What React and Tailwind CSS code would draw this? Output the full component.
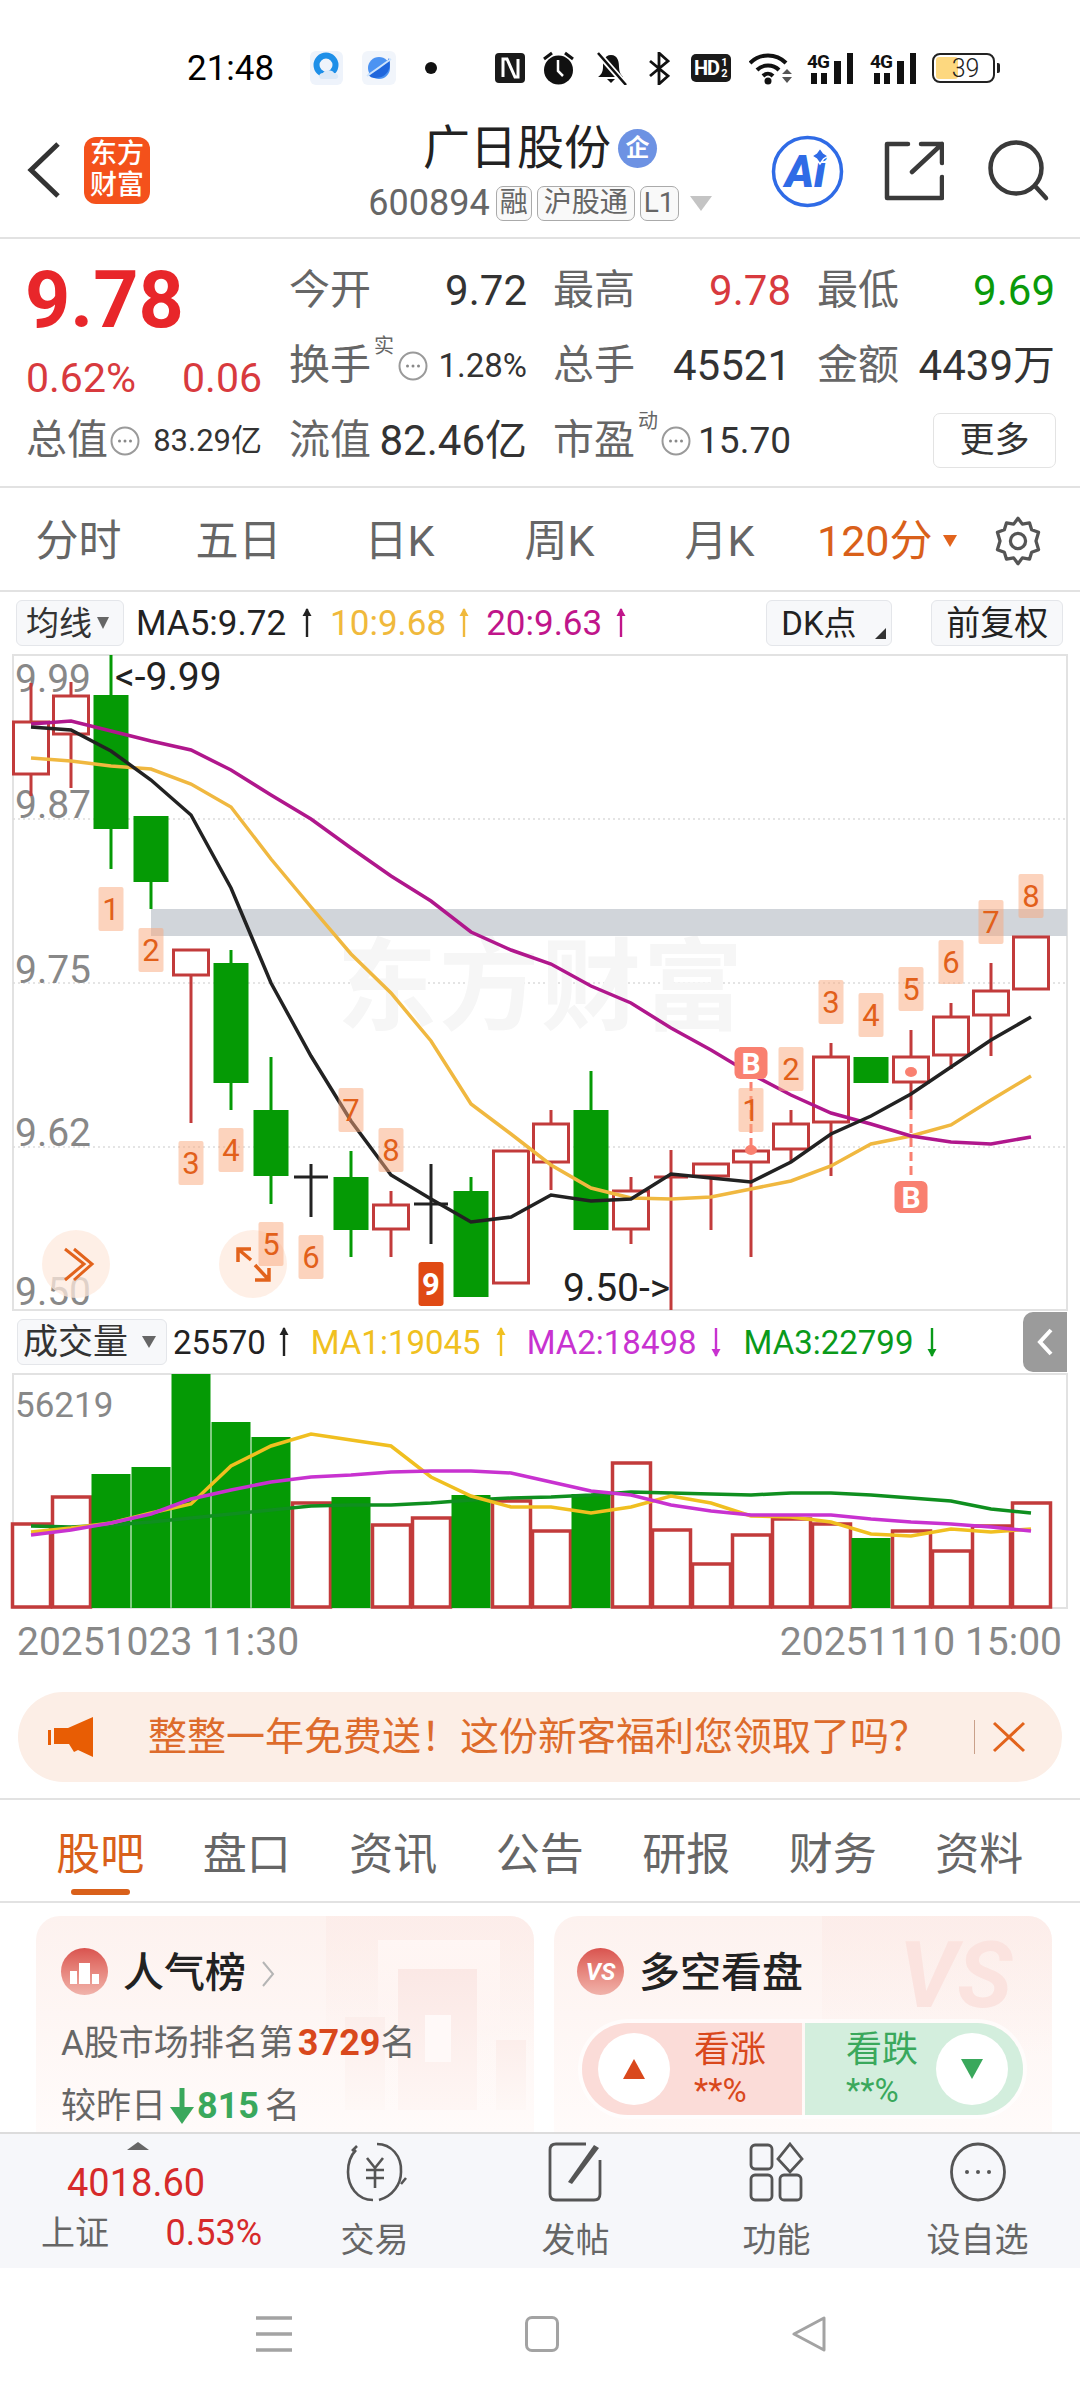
import React from 'react';

const xs = Array.from({ length: 26 }, (_, i) => 31 + i * 40);
const RED = '#c23b3b';
const GREEN = '#059a05';

// [high, top, bottom, low, kind]
const candles = [
  [683, 721, 775, 796, 'r'], [682, 695, 735, 788, 'r'], [655, 695, 829, 869, 'g'], [816, 816, 882, 909, 'g'],
  [949, 949, 976, 1123, 'r'], [950, 963, 1083, 1110, 'g'], [1057, 1110, 1176, 1204, 'g'], [1164, 1177, 1177, 1217, 'k'],
  [1151, 1177, 1230, 1257, 'g'], [1191, 1204, 1230, 1257, 'r'], [1164, 1204, 1204, 1244, 'k'], [1177, 1191, 1297, 1297, 'g'],
  [1150, 1150, 1284, 1284, 'r'], [1110, 1123, 1163, 1190, 'r'], [1071, 1110, 1230, 1230, 'g'], [1177, 1190, 1230, 1244, 'r'],
  [1150, 1177, 1177, 1310, 'l'], [1163, 1163, 1177, 1230, 'r'], [1150, 1150, 1163, 1257, 'r'], [1110, 1123, 1150, 1163, 'r'],
  [1043, 1056, 1123, 1176, 'r'], [1057, 1057, 1083, 1083, 'g'], [1030, 1056, 1083, 1110, 'r'], [1003, 1016, 1056, 1069, 'r'],
  [963, 990, 1016, 1056, 'r'], [936, 936, 990, 990, 'r'],
];

const maBlack = [727, 730, 751, 780, 815, 888, 983, 1056, 1121, 1175, 1199, 1222, 1217, 1195, 1201, 1199, 1174, 1178, 1182, 1162, 1134, 1116, 1094, 1067, 1040, 1017];
const maOrange = [758, 761, 766, 769, 784, 807, 859, 907, 954, 993, 1041, 1104, 1134, 1165, 1188, 1198, 1199, 1197, 1189, 1181, 1166, 1144, 1136, 1125, 1100, 1076];
const maPurple = [724, 721, 731, 741, 750, 770, 795, 819, 848, 876, 901, 932, 950, 964, 986, 1003, 1028, 1050, 1074, 1095, 1113, 1124, 1136, 1142, 1144, 1137];

const volumes = [1523, 1496, 1474, 1467, 1374, 1422, 1437, 1502, 1497, 1524, 1517, 1495, 1500, 1530, 1494, 1462, 1529, 1563, 1534, 1518, 1523, 1538, 1530, 1550, 1525, 1502];
const volGreen = [2, 3, 4, 5, 6, 8, 11, 14, 21];
const vol1 = [1532, 1528, 1523, 1513, 1504, 1466, 1446, 1434, 1440, 1446, 1477, 1496, 1507, 1507, 1513, 1507, 1496, 1503, 1516, 1517, 1522, 1534, 1536, 1529, 1532, 1529];
const vol2 = [1535, 1530, 1523, 1514, 1499, 1490, 1482, 1477, 1475, 1472, 1471, 1471, 1473, 1482, 1491, 1495, 1505, 1511, 1515, 1515, 1515, 1519, 1522, 1524, 1527, 1531];
const vol3 = [1526, 1527, 1525, 1522, 1518, 1514, 1510, 1506, 1505, 1505, 1503, 1500, 1498, 1497, 1495, 1492, 1493, 1494, 1495, 1493, 1493, 1495, 1498, 1501, 1509, 1513];

const tags = [
  [111, 909, '1'], [151, 950, '2'], [191, 1163, '3'], [231, 1150, '4'], [271, 1244, '5'], [311, 1257, '6'], [351, 1110, '7'], [391, 1150, '8'],
  [751, 1110, '1'], [791, 1069, '2'], [831, 1002, '3'], [871, 1015, '4'], [911, 989, '5'], [951, 962, '6'], [991, 922, '7'], [1031, 896, '8'],
];

const pts = (arr) => arr.map((y, i) => `${xs[i]},${y}`).join(' ');

const Arrow = ({ up = true, color }) => (
  <svg width="12" height="32" viewBox="0 0 12 32" className="shrink-0">
    <path d="M6 2V30" stroke={color} strokeWidth="2.4" />
    {up ? <path d="M1.5 9L6 1L10.5 9Z" fill={color} /> : <path d="M1.5 23L6 31L10.5 23Z" fill={color} />}
  </svg>
);

const Dots = ({ size = 30 }) => (
  <svg width={size} height={size} viewBox="0 0 30 30" className="shrink-0">
    <circle cx="15" cy="15" r="13.5" fill="none" stroke="#9a9a9a" strokeWidth="2" />
    <circle cx="9.5" cy="15" r="1.5" fill="#888" />
    <circle cx="15" cy="15" r="1.5" fill="#888" />
    <circle cx="20.5" cy="15" r="1.5" fill="#888" />
  </svg>
);

const Signal = ({ className }) => (
  <div className={`relative h-[31px] w-[46px] ${className}`}>
    <span className="absolute left-0 top-[-1px] text-[19px] font-bold leading-none tracking-[-1px] text-[#111]">4G</span>
    <svg width="46" height="31" viewBox="0 0 46 31" className="absolute inset-0">
      <path d="M4 20H10V31H4ZM14 20H20V31H14ZM27 8H34V31H27ZM40 0H46V31H40Z" fill="#111" />
    </svg>
  </div>
);

const StatusBar = () => (
  <div className="flex h-[105px] items-center pl-[187px] pt-[31px] text-black">
    <span className="w-[123px] text-[35px] leading-none">21:48</span>
    <svg width="33" height="34" viewBox="0 0 33 34">
      <rect width="33" height="34" rx="6" fill="#eef3fb" />
      <circle cx="16" cy="14" r="9.5" fill="none" stroke="#1e8fe8" strokeWidth="6" />
      <path d="M12 28C8 28 8 22 13 22C15 18 23 19 24 22C29 22 30 28 25 28Z" fill="#dce9f7" />
    </svg>
    <svg width="34" height="34" viewBox="0 0 34 34" className="ml-[19px]">
      <rect width="34" height="34" rx="6" fill="#f1f5fb" />
      <circle cx="17" cy="17" r="11" fill="#4b93f2" />
      <path d="M6 23C13 22 23 15 27 7C30 16 26 27 13 27C10 27 8 26 6 23Z" fill="#1f66dc" />
      <path d="M5 25L29 8" stroke="#cfe4fb" strokeWidth="2" />
    </svg>
    <span className="ml-[29px] h-[12px] w-[12px] rounded-full bg-[#111]" />
    <svg width="30" height="30" viewBox="0 0 30 30" className="ml-[58px]">
      <rect width="30" height="30" rx="4" fill="#1a1a1a" />
      <path d="M8 24V6H12L20 24H23V6" fill="none" stroke="#fff" strokeWidth="3" />
    </svg>
    <svg width="33" height="34" viewBox="0 0 33 34" className="ml-[17px]">
      <circle cx="16.5" cy="19" r="14.5" fill="#111" />
      <path d="M16 9V20L21 25" fill="none" stroke="#fff" strokeWidth="2.5" />
      <path d="M2 8L10 2M31 8L23 2" stroke="#111" strokeWidth="3" />
    </svg>
    <svg width="32" height="33" viewBox="0 0 32 33" className="ml-[20px]">
      <path d="M16 3C9 3 8 10 8 15C8 20 6 23 3 25H28C26 23 24 20 24 15C24 10 23 3 16 3Z" fill="#111" />
      <path d="M12 27H20L16 31Z" fill="#111" />
      <path d="M2 0L30 32" stroke="#fff" strokeWidth="6" />
      <path d="M3 1L31 33" stroke="#111" strokeWidth="2.5" />
    </svg>
    <svg width="21" height="33" viewBox="0 0 21 33" className="ml-[22px]">
      <path d="M1 9L19 24L10 32V1L19 9L1 24" fill="none" stroke="#111" strokeWidth="2.8" />
    </svg>
    <div className="ml-[21px] flex h-[28px] w-[40px] items-center rounded-[5px] bg-[#1a1a1a] pl-[3px] text-[20px] font-bold leading-none tracking-[-1px] text-white">
      HD
      <span className="ml-[2px] flex flex-col text-[11px] leading-[11px]">
        <span>1</span>
        <span>2</span>
      </span>
    </div>
    <svg width="44" height="33" viewBox="0 0 44 33" className="ml-[18px]">
      <path d="M1 11C11 1 27 1 37 11M8 18C14 12 24 12 30 18" fill="none" stroke="#111" strokeWidth="4" />
      <path d="M14 24C17 21 21 21 24 24" fill="none" stroke="#111" strokeWidth="4" />
      <circle cx="19" cy="29" r="3.5" fill="#111" />
      <path d="M33 22H43L38 17ZM33 25H43L38 31Z" fill="#555" />
    </svg>
    <Signal className="ml-[14px]" />
    <Signal className="ml-[17px]" />
    <div className="relative ml-[16px] flex h-[30px] w-[63px] items-center justify-center rounded-[8px] border-[2.5px] border-[#222] text-[25px] font-light leading-none text-[#222]">
      <span className="absolute inset-y-[2px] left-[2px] w-[22px] rounded-[3px] bg-[#fdd87f]" />
      <span className="relative ml-[4px]">39</span>
    </div>
    <span className="ml-[2px] h-[10px] w-[3px] rounded-r-[2px] bg-[#222]" />
  </div>
);

const SubTag = ({ className, children }) => (
  <span className={`flex h-[35px] items-center justify-center rounded-[7px] border border-[#aaa] bg-[#f9f9f9] text-[28px] leading-none text-[#666] ${className}`}>
    {children}
  </span>
);

const Header = () => (
  <div className="grid h-[134px] grid-cols-[1fr_auto_1fr] border-b-2 border-[#e2e2e2]">
    <div className="flex items-center pb-[2px]">
      <svg width="36" height="58" viewBox="0 0 36 58" className="ml-[26px]">
        <path d="M32 3L5 29L32 55" fill="none" stroke="#333" strokeWidth="5" />
      </svg>
      <div className="ml-[22px] flex h-[67px] w-[66px] flex-col items-center justify-center rounded-[12px] bg-[#f4511b] text-[27px] font-medium leading-[31px] text-[#fff]">
        <span>东方</span>
        <span>财富</span>
      </div>
    </div>
    <div className="flex flex-col items-center pt-[20px]">
      <div className="flex items-center">
        <span className="text-[47px] leading-[46px] text-[#222]">广日股份</span>
        <span className="ml-[7px] flex h-[39px] w-[39px] items-center justify-center rounded-full bg-[#6d92e3] text-[24px] font-bold leading-none text-white">企</span>
      </div>
      <div className="mt-[14px] flex items-center text-[#666]">
        <span className="text-[36px] leading-none">600894</span>
        <SubTag className="ml-[6px] w-[36px]">融</SubTag>
        <SubTag className="ml-[5px] w-[98px]">沪股通</SubTag>
        <SubTag className="ml-[5px] w-[39px]">L1</SubTag>
        <span className="ml-[11px] h-0 w-0 border-x-[11px] border-t-[15px] border-x-transparent border-t-[#c4c4c4]" />
      </div>
    </div>
    <div className="flex items-center justify-end pr-[30px]">
      <svg width="73" height="73" viewBox="0 0 73 73">
        <circle cx="36.5" cy="36.5" r="34" fill="#fff" stroke="#2f6be6" strokeWidth="3.5" />
        <text x="14" y="52" fontSize="44" fontWeight="900" fontStyle="italic" fill="#2f6be6">Ai</text>
        <path d="M49 13L52.5 18L57 21L52.5 24L49 29L45.5 24L41 21L45.5 18Z" fill="#2f6be6" stroke="#fff" strokeWidth="1.5" />
      </svg>
      <svg width="60" height="60" viewBox="0 0 60 60" className="ml-[40px]" fill="none" stroke="#3a3a3a" strokeWidth="4.5" strokeLinecap="round" strokeLinejoin="round">
        <path d="M24 3H3V57H58V36" />
        <path d="M37 3H58V22M58 3L28 31" />
      </svg>
      <svg width="62" height="62" viewBox="0 0 62 62" className="ml-[44px]" fill="none" stroke="#3a3a3a" strokeWidth="4.5" strokeLinecap="round">
        <circle cx="28" cy="28" r="25.5" />
        <path d="M47 46L58 58" />
      </svg>
    </div>
  </div>
);

const Stat = ({ label, value, color = 'text-[#333]' }) => (
  <div className="flex h-[75px] w-[238px] items-center justify-between">
    <span className="text-[41px] leading-none text-[#666]">{label}</span>
    <span className={`text-[42px] leading-none ${color}`}>{value}</span>
  </div>
);

const Quote = () => (
  <div className="grid h-[249px] grid-cols-[263px_264px_264px_239px] grid-rows-[75px_75px_75px] border-b-2 border-[#e2e2e2] pl-[26px] pt-[14px]">
    <div className="row-span-2">
      <div className="mt-[2px] -ml-[1px] text-[79px] font-bold leading-[90px] text-[#e8262a]">9.78</div>
      <div className="mt-[13px] flex w-[236px] justify-between text-[41px] leading-none text-[#d83a3e]">
        <span>0.62%</span>
        <span>0.06</span>
      </div>
    </div>
    <Stat label="今开" value="9.72" />
    <Stat label="最高" value="9.78" color="text-[#d83a3e]" />
    <Stat label="最低" value="9.69" color="text-[#0a9a0a]" />
    <div className="flex h-[75px] w-[238px] items-center">
      <span className="text-[41px] leading-none text-[#666]">换手</span>
      <span className="w-[27px] -translate-y-[20px] pl-[3px] text-[20px] leading-none text-[#666]">实</span>
      <Dots />
      <span className="ml-auto text-[33px] leading-none text-[#333]">1.28%</span>
    </div>
    <Stat label="总手" value="45521" />
    <Stat label="金额" value="4439万" />
    <div className="flex h-[75px] w-[236px] items-center">
      <span className="text-[41px] leading-none text-[#666]">总值</span>
      <span className="ml-[2px]"><Dots /></span>
      <span className="ml-auto text-[31px] leading-none text-[#333]">83.29亿</span>
    </div>
    <div className="flex h-[75px] w-[238px] items-center justify-between">
      <span className="text-[41px] leading-none text-[#666]">流值</span>
      <span className="text-[42px] leading-none text-[#333]">82.46亿</span>
    </div>
    <div className="flex h-[75px] w-[238px] items-center">
      <span className="text-[41px] leading-none text-[#666]">市盈</span>
      <span className="w-[26px] -translate-y-[20px] pl-[3px] text-[20px] leading-none text-[#666]">动</span>
      <Dots />
      <span className="ml-auto text-[37px] leading-none text-[#333]">15.70</span>
    </div>
    <div className="flex h-[75px] items-center pl-[116px]">
      <span className="flex h-[55px] w-[123px] items-center justify-center rounded-[7px] border border-[#e3e3e3] text-[35px] leading-none text-[#333]">更多</span>
    </div>
  </div>
);

const Periods = () => (
  <div className="flex h-[104px] items-center border-b-2 border-[#e2e2e2] pt-[4px] text-[43px] leading-none text-[#666]">
    <span className="w-[160px] pr-[3px] text-center">分时</span>
    <span className="w-[160px] pr-[3px] text-center">五日</span>
    <span className="w-[160px] pr-[1px] text-center">日K</span>
    <span className="w-[160px] pr-[1px] text-center">周K</span>
    <span className="w-[160px] pr-[1px] text-center">月K</span>
    <span className="flex w-[160px] items-center pl-[17px] text-[#d9601a]">
      120分
      <span className="ml-[10px] h-0 w-0 border-x-[7px] border-t-[12px] border-x-transparent border-t-[#e2631c]" />
    </span>
    <svg width="52" height="52" viewBox="0 0 24 24" className="ml-[32px]" fill="none" stroke="#555" strokeWidth="1.5" strokeLinejoin="round">
      <path d="M12 1.5L14 4.2L17.3 3.6L18.3 6.8L21.5 8L20.3 12L21.5 16L18.3 17.2L17.3 20.4L14 19.8L12 22.5L10 19.8L6.7 20.4L5.7 17.2L2.5 16L3.7 12L2.5 8L5.7 6.8L6.7 3.6L10 4.2Z" />
      <circle cx="12" cy="12" r="3.5" />
    </svg>
  </div>
);

const MaRow = () => (
  <div className="flex h-[62px] items-center pl-[16px] text-[35px] leading-none">
    <div className="flex h-[46px] w-[108px] items-center rounded-[6px] border border-[#e4e6ea] bg-[#f7f8fa] pl-[9px] text-[33px] text-[#333]">
      均线
      <span className="ml-[5px] h-0 w-0 border-x-[6px] border-t-[12px] border-x-transparent border-t-[#666]" />
    </div>
    <span className="ml-[12px] text-[#222]">MA5:9.72</span>
    <span className="ml-[15px]"><Arrow color="#222" /></span>
    <span className="ml-[17px] text-[#f0b93c]">10:9.68</span>
    <span className="ml-[12px]"><Arrow color="#f0b93c" /></span>
    <span className="ml-[16px] text-[#c0158a]">20:9.63</span>
    <span className="ml-[13px]"><Arrow color="#c0158a" /></span>
    <div className="relative ml-[139px] flex h-[46px] w-[126px] items-center rounded-[6px] border border-[#e4e6ea] bg-[#f7f8fa] pl-[14px] text-[33px] text-[#222]">
      DK点
      <span className="absolute bottom-[6px] right-[5px] h-0 w-0 border-b-[11px] border-l-[11px] border-b-[#333] border-l-transparent" />
    </div>
    <div className="ml-[39px] flex h-[46px] w-[132px] items-center justify-center rounded-[6px] border border-[#e4e6ea] bg-[#f7f8fa] text-[34px] text-[#222]">前复权</div>
  </div>
);

const PriceChart = () => (
  <svg width="1080" height="657" viewBox="0 654 1080 657" className="block overflow-visible" fontFamily="Roboto, 'Noto Sans CJK SC', sans-serif">
    <rect x="13" y="655" width="1054" height="655" fill="#fff" stroke="#e2e2e2" strokeWidth="2" />
    {[819, 983, 1147].map((y) => (
      <path key={y} d={`M13 ${y}H1067`} stroke="#dcdcdc" strokeWidth="1.5" strokeDasharray="2 3" />
    ))}
    <text x="337" y="1022" fontSize="100" fontWeight="700" fill="#f6f6f6" textLength="406">东方财富</text>
    <rect x="151" y="909" width="916" height="27" fill="#d1d5da" />
    {[['9.99', 692], ['9.87', 818], ['9.75', 983], ['9.62', 1146], ['9.50', 1305]].map(([t, y]) => (
      <text key={t} x="15" y={y} fontSize="39" fill="#888">{t}</text>
    ))}
    <text x="115" y="690" fontSize="39" fill="#222">&lt;-9.99</text>
    <text x="563" y="1301" fontSize="39" fill="#222">9.50-&gt;</text>

    <circle cx="76" cy="1264" r="34" fill="#fdeade" opacity="0.75" />
    <path d="M65 1249L84 1264L65 1280M74 1249L92 1264L74 1280" fill="none" stroke="#e2631c" strokeWidth="3" />
    <circle cx="253" cy="1264" r="34" fill="#fdeade" opacity="0.75" />
    <path d="M238 1262V1249H251M238 1249L251 1260M269 1268V1280H255M269 1280L255 1265" fill="none" stroke="#e2631c" strokeWidth="3.5" />

    {candles.map(([high, top, bottom, low, kind], i) => {
      const x = xs[i];
      const color = kind === 'g' ? GREEN : kind === 'k' ? '#222' : RED;
      return (
        <g key={i}>
          <path d={`M${x} ${high}V${low}`} stroke={color} strokeWidth="3" />
          {kind === 'g' && <rect x={x - 17.5} y={top} width="35" height={bottom - top} fill={color} />}
          {kind === 'r' && <rect x={x - 17.5} y={top + 1} width="35" height={bottom - top - 2} fill="#fff" stroke={color} strokeWidth="3" />}
          {(kind === 'k' || kind === 'l') && <path d={`M${x - 17} ${top}H${x + 17}`} stroke={color} strokeWidth="3" />}
        </g>
      );
    })}

    <polyline points={pts(maOrange)} fill="none" stroke="#f0b840" strokeWidth="3.5" />
    <polyline points={pts(maPurple)} fill="none" stroke="#b0178c" strokeWidth="3.5" />
    <polyline points={pts(maBlack)} fill="none" stroke="#222" strokeWidth="3.5" />

    <path d="M751 1082V1150M911 1110V1178" stroke="#f98070" strokeWidth="3" strokeDasharray="9 5" />
    <ellipse cx="751" cy="1150" rx="6" ry="5" fill="#f98070" />
    <ellipse cx="911" cy="1072" rx="6" ry="5" fill="#f98070" />

    {tags.map(([x, y, t]) => (
      <g key={`${x}-${y}`}>
        <rect x={x - 12.5} y={y - 22} width="25" height="44" rx="2" fill="#f9a77c" opacity="0.5" />
        <text x={x} y={y + 11} fontSize="31" fill="#e2601a" textAnchor="middle">{t}</text>
      </g>
    ))}
    <rect x="418.5" y="1262" width="25" height="44" rx="3" fill="#e04a14" />
    <text x="431" y="1295" fontSize="31" fontWeight="700" fill="#fff" textAnchor="middle">9</text>
    {[[751, 1063], [911, 1197]].map(([x, y]) => (
      <g key={x}>
        <rect x={x - 16.5} y={y - 16} width="33" height="32" rx="6" fill="#f98070" />
        <text x={x} y={y + 11} fontSize="30" fontWeight="700" fill="#fff" textAnchor="middle">B</text>
      </g>
    ))}
  </svg>
);

const VolRow = () => (
  <div className="relative flex h-[62px] items-center pl-[17px] text-[33px] leading-none">
    <div className="flex h-[46px] w-[150px] items-center rounded-[6px] border border-[#e4e6ea] bg-[#f7f8fa] pl-[5px] text-[35px] text-[#333]">
      成交量
      <span className="ml-[14px] h-0 w-0 border-x-[7px] border-t-[12px] border-x-transparent border-t-[#666]" />
    </div>
    <span className="ml-[6px] text-[#222]">25570</span>
    <span className="ml-[12px]"><Arrow color="#222" /></span>
    <span className="ml-[21px] text-[#f0c020]">MA1:19045</span>
    <span className="ml-[14px]"><Arrow color="#f0c020" /></span>
    <span className="ml-[20px] text-[#c832d0]">MA2:18498</span>
    <span className="ml-[13px]"><Arrow up={false} color="#c832d0" /></span>
    <span className="ml-[22px] text-[#0a9a1a]">MA3:22799</span>
    <span className="ml-[13px]"><Arrow up={false} color="#0a9a1a" /></span>
    <div className="absolute right-[13px] top-[1px] flex h-[60px] w-[44px] items-center justify-center rounded-l-[10px] bg-[#9b9b9b]">
      <svg width="20" height="30" viewBox="0 0 20 30">
        <path d="M16 3L5 15L16 27" fill="none" stroke="#fff" strokeWidth="4" />
      </svg>
    </div>
  </div>
);

const VolChart = () => (
  <svg width="1080" height="236" viewBox="0 1373 1080 236" className="block" fontFamily="Roboto, 'Noto Sans CJK SC', sans-serif">
    <rect x="13" y="1374" width="1054" height="234" fill="#fff" stroke="#e2e2e2" strokeWidth="2" />
    <text x="15" y="1417" fontSize="35" fill="#888">56219</text>
    {volumes.map((top, i) => {
      const x = xs[i];
      if (volGreen.includes(i)) {
        return <rect key={i} x={x - 19.5} y={top} width="39" height={1608 - top} fill={GREEN} />;
      }
      return <rect key={i} x={x - 18.5} y={top + 1} width="38" height={1606 - top} fill="#fff" stroke={RED} strokeWidth="3.5" />;
    })}
    <polyline points={pts(vol3)} fill="none" stroke="#0f8f1f" strokeWidth="3.5" />
    <polyline points={pts(vol1)} fill="none" stroke="#f0bf20" strokeWidth="3.5" />
    <polyline points={pts(vol2)} fill="none" stroke="#c832d0" strokeWidth="3.5" />
  </svg>
);

const Banner = () => (
  <div className="mx-[18px] mt-[26px] flex h-[90px] items-center rounded-[45px] bg-[#fceee6] pl-[30px]">
    <svg width="46" height="40" viewBox="0 0 46 40" className="shrink-0">
      <path d="M0 13H3V28H0ZM6 11H20L45 0V40L30 33L26 35L21 27H6Z" fill="#e85d04" />
    </svg>
    <span className="ml-[54px] w-[780px] text-[39px] leading-none text-[#dd6b2b]">整整一年免费送！这份新客福利您领取了吗？</span>
    <span className="ml-[46px] h-[34px] w-[1px] bg-[#c9a08a]" />
    <svg width="34" height="32" viewBox="0 0 34 32" className="ml-[17px]">
      <path d="M2 2L32 30M32 2L2 30" stroke="#e2631c" strokeWidth="3" />
    </svg>
  </div>
);

const Tabs = () => (
  <div className="flex h-[105px] items-center border-b-2 border-t-2 border-[#e2e2e2] pl-[27px] pt-[8px] text-[44px] leading-none text-[#666]">
    {['股吧', '盘口', '资讯', '公告', '研报', '财务', '资料'].map((t, i) => (
      <span key={t} className={`relative w-[146.5px] text-center ${i === 0 ? 'text-[#d9601a]' : ''}`}>
        {t}
        {i === 0 && <span className="absolute left-[44px] top-[56px] h-[6px] w-[59px] rounded-[3px] bg-[#d9601a]" />}
      </span>
    ))}
  </div>
);

const HotCard = () => (
  <div className="relative h-[216px] w-[498px] overflow-hidden rounded-t-[24px] bg-gradient-to-b from-[#fdf2ef] to-[#fffbfa] pl-[25px]">
    <div className="absolute right-0 top-0 h-[140px] w-[208px] bg-gradient-to-b from-[#fceae6] to-transparent opacity-60" />
    <div className="absolute left-[342px] top-[24px] h-[170px] w-[122px] bg-gradient-to-b from-[#fff6f4] to-transparent" />
    <div className="absolute left-[362px] top-[53px] flex h-[141px] w-[79px] items-start justify-center bg-gradient-to-b from-[#fbe8e5] to-[#fef6f4] pt-[46px]">
      <span className="h-[47px] w-[26px] bg-[#fff9f8]" />
    </div>
    <div className="absolute left-[309px] top-[101px] h-[93px] w-[40px] bg-gradient-to-b from-[#fceeeb] to-[#fef8f6]" />
    <div className="absolute left-[460px] top-[124px] h-[70px] w-[30px] bg-gradient-to-b from-[#fceeeb] to-[#fef8f6]" />
    <div className="relative flex items-center pt-[36px]">
      <span className="-mt-[4px] flex h-[47px] w-[47px] items-end justify-center gap-[2px] rounded-full bg-gradient-to-b from-[#d9534f] to-[#f0b3ab] pb-[11px]">
        <span className="h-[13px] w-[7px] bg-white" />
        <span className="h-[21px] w-[11px] bg-white" />
        <span className="h-[10px] w-[7px] bg-white" />
      </span>
      <span className="ml-[15px] text-[41px] font-medium leading-none text-[#222]">人气榜</span>
      <svg width="14" height="28" viewBox="0 0 14 28" className="ml-[15px]">
        <path d="M2 2L12 14L2 26" fill="none" stroke="#b5b5b5" strokeWidth="2" />
      </svg>
    </div>
    <div className="relative mt-[30px] flex items-center text-[35px] leading-none text-[#666]">
      A股市场排名第<span className="ml-[4px] text-[36px] font-bold text-[#d9481c]">3729</span>名
    </div>
    <div className="relative mt-[26px] flex items-center text-[35px] leading-none text-[#666]">
      较昨日
      <svg width="26" height="38" viewBox="0 0 26 38" className="ml-[3px]">
        <path d="M13 1V24" stroke="#3aa85c" strokeWidth="5" />
        <path d="M1 20H25L13 37Z" fill="#3aa85c" />
      </svg>
      <span className="ml-[2px] text-[36px] font-bold text-[#3aa85c]">815</span>
      <span className="ml-[6px]">名</span>
    </div>
  </div>
);

const VsCard = () => (
  <div className="relative ml-[20px] h-[216px] w-[498px] overflow-hidden rounded-t-[24px] bg-gradient-to-b from-[#fdf2ef] to-[#fffbfa] pl-[23px]">
    <div className="absolute right-0 top-0 h-[140px] w-[230px] bg-gradient-to-b from-[#fceae6] to-transparent opacity-60" />
    <span className="absolute left-[345px] top-[14px] text-[92px] font-bold italic leading-[92px] text-[#fbe3df]">VS</span>
    <div className="relative flex items-center pt-[36px]">
      <span className="-mt-[4px] flex h-[47px] w-[47px] items-center justify-center rounded-full bg-gradient-to-b from-[#d9534f] to-[#f0b3ab] text-[24px] font-bold italic leading-none text-white">VS</span>
      <span className="ml-[15px] text-[41px] font-medium leading-none text-[#222]">多空看盘</span>
    </div>
    <div className="relative ml-[5px] mt-[28px] flex h-[92px] w-[441px] overflow-hidden rounded-[46px] ring-4 ring-white/60">
      <div className="flex w-[220px] items-center bg-[#fbdcd8] pl-[16px]">
        <span className="flex h-[72px] w-[72px] items-center justify-center rounded-full bg-white">
          <span className="h-0 w-0 border-x-[11px] border-b-[20px] border-x-transparent border-b-[#d9481c]" />
        </span>
        <div className="ml-[24px] text-[#d9481c]">
          <div className="text-[36px] leading-none">看涨</div>
          <div className="mt-[6px] text-[33px] leading-none">**%</div>
        </div>
      </div>
      <div className="ml-[3px] flex w-[218px] items-center bg-[#d3eedd] pl-[41px]">
        <div className="text-[#3aa85c]">
          <div className="text-[36px] leading-none">看跌</div>
          <div className="mt-[6px] text-[33px] leading-none">**%</div>
        </div>
        <span className="ml-[18px] flex h-[72px] w-[72px] items-center justify-center rounded-full bg-white">
          <span className="h-0 w-0 border-x-[11px] border-t-[20px] border-x-transparent border-t-[#3aa85c]" />
        </span>
      </div>
    </div>
  </div>
);

const BottomItem = ({ label, children }) => (
  <div className="flex w-[201px] flex-col items-center">
    <div className="flex h-[60px] items-center">{children}</div>
    <span className="mt-[21px] text-[34px] leading-none text-[#666]">{label}</span>
  </div>
);

const BottomBar = () => (
  <div className="flex h-[136px] border-t-2 border-[#dcdcdc] bg-[#f6f7fa]">
    <div className="w-[274px] pl-[41px]">
      <span className="ml-[86px] mt-[8px] block h-0 w-0 border-x-[11px] border-b-[8px] border-x-transparent border-b-[#666]" />
      <div className="ml-[26px] mt-[14px] text-[38px] leading-none text-[#d62a2a]">4018.60</div>
      <div className="mt-[13px] flex w-[221px] items-center justify-between leading-none">
        <span className="text-[34px] text-[#666]">上证</span>
        <span className="text-[36px] text-[#d62a2a]">0.53%</span>
      </div>
    </div>
    <div className="flex pt-[8px]">
      <BottomItem label="交易">
        <svg width="64" height="60" viewBox="0 0 64 60" fill="none" stroke="#555" strokeWidth="2.6">
          <path d="M34 2C48 2 59 14 58 30C58 42 50 54 36 58M30 58C14 58 5 44 5 30C5 20 9 12 13 8" />
          <path d="M9 9L14 4M58 42L63 36" />
          <path d="M24 16L32 26L40 16M32 26V46M23 28H41M23 36H41" />
        </svg>
      </BottomItem>
      <BottomItem label="发帖">
        <svg width="56" height="60" viewBox="0 0 56 60" fill="none" stroke="#555" strokeWidth="2.8">
          <path d="M38 2H8C4 2 2 4 2 8V52C2 56 4 58 8 58H46C50 58 52 56 52 52V18" />
          <path d="M20 40L46 3L51 6L24 42Z" fill="#555" stroke="none" />
        </svg>
      </BottomItem>
      <BottomItem label="功能">
        <svg width="56" height="60" viewBox="0 0 56 60" fill="none" stroke="#555" strokeWidth="2.8">
          <rect x="2" y="3" width="21" height="24" rx="4" />
          <path d="M41 2L53 17L41 30L29 17Z" />
          <rect x="2" y="33" width="21" height="25" rx="4" />
          <rect x="31" y="33" width="21" height="25" rx="4" />
        </svg>
      </BottomItem>
      <BottomItem label="设自选">
        <svg width="58" height="60" viewBox="0 0 58 60" fill="none" stroke="#555" strokeWidth="2.8">
          <ellipse cx="29" cy="30" rx="26.5" ry="28" />
          <circle cx="18" cy="30" r="2" fill="#555" stroke="none" />
          <circle cx="29" cy="30" r="2" fill="#555" stroke="none" />
          <circle cx="40" cy="30" r="2" fill="#555" stroke="none" />
        </svg>
      </BottomItem>
    </div>
  </div>
);

const NavBar = () => (
  <div className="flex h-[132px] items-start pl-[256px] pt-[48px]">
    <svg width="36" height="36" viewBox="0 0 36 36">
      <path d="M0 2H36M0 18H36M0 34H36" stroke="#a3a3a3" strokeWidth="3.5" />
    </svg>
    <span className="ml-[233px] h-[36px] w-[34px] rounded-[7px] border-[3px] border-[#a3a3a3]" />
    <svg width="36" height="36" viewBox="0 0 36 36" className="ml-[232px]">
      <path d="M33 2V34L3 18Z" fill="none" stroke="#a3a3a3" strokeWidth="3" strokeLinejoin="round" />
    </svg>
  </div>
);

export default function App() {
  return (
    <div className="h-[2400px] w-[1080px] overflow-hidden bg-white [font-family:Roboto,'Noto_Sans_CJK_SC',sans-serif]">
      <StatusBar />
      <Header />
      <Quote />
      <Periods />
      <MaRow />
      <PriceChart />
      <VolRow />
      <VolChart />
      <div className="flex h-[57px] items-center justify-between pl-[17px] pr-[18px] pt-[10px] text-[39px] leading-none text-[#888]">
        <span>20251023 11:30</span>
        <span>20251110 15:00</span>
      </div>
      <Banner />
      <div className="mt-[16px]"><Tabs /></div>
      <div className="flex pl-[36px] pt-[13px]">
        <HotCard />
        <VsCard />
      </div>
      <BottomBar />
      <NavBar />
    </div>
  );
}
